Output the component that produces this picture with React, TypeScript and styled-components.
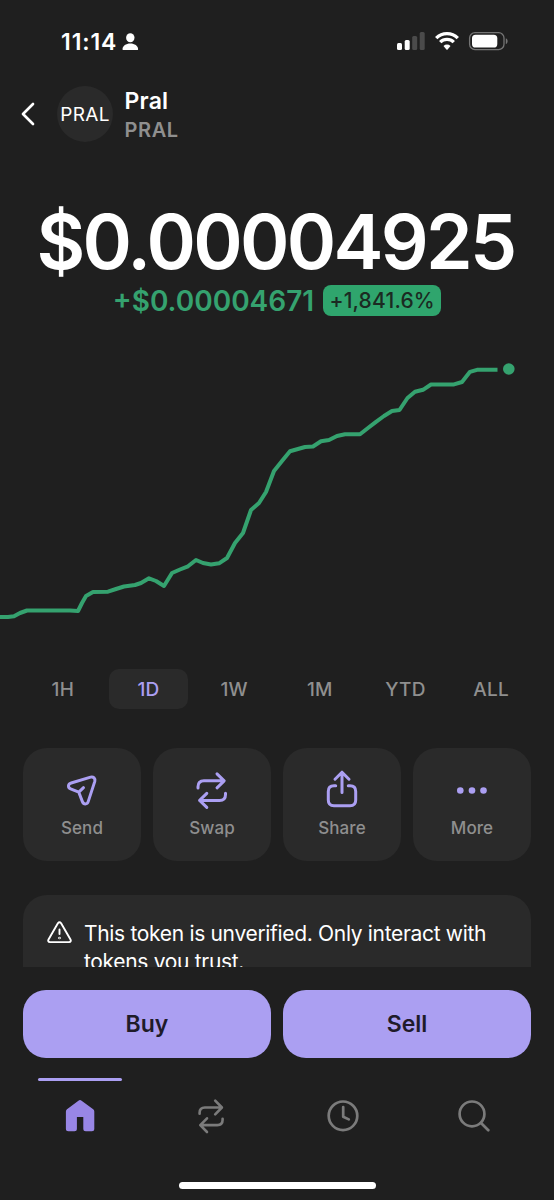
import React from "react";
import styled, { createGlobalStyle } from "styled-components";

const Global = createGlobalStyle`
  * { box-sizing: border-box; }
  html, body { margin: 0; background: #1f1f1f; }
  button { border: 0; margin: 0; padding: 0; background: none; font: inherit; color: inherit; }
  svg { display: block; flex: none; overflow: visible; }
`;

const Screen = styled.div`
  width: 554px;
  height: 1200px;
  overflow: hidden;
  display: flex;
  flex-direction: column;
  background: #1f1f1f;
  color: #fff;
  font-family: Inter, "Liberation Sans", sans-serif;
  white-space: nowrap;
`;

const StatusBar = styled.header`
  height: 82px;
  flex: none;
  padding: 0 46px 0 61px;
  display: flex;
  justify-content: space-between;
  align-items: center;
`;

const Clock = styled.div`
  padding-top: 1px;
  display: flex;
  align-items: center;
  gap: 5px;
  font-size: 23px;
  font-weight: 600;
  letter-spacing: 0.9px;
`;

const StatusIcons = styled.div`
  display: flex;
  align-items: center;
  gap: 10px;
`;

const TokenHeader = styled.div`
  height: 64px;
  flex: none;
  padding-left: 21px;
  display: flex;
  align-items: center;
`;

const Avatar = styled.div`
  width: 56px;
  height: 56px;
  margin: 0 11.5px 0 22px;
  border-radius: 50%;
  background: #2a2a2a;
  display: flex;
  align-items: center;
  justify-content: center;
  font-size: 19px;
  letter-spacing: 0.3px;
`;

const TokenTitle = styled.div`
  padding-top: 4px;
`;

const TokenName = styled.div`
  font-size: 23px;
  line-height: 29px;
  font-weight: 600;
  letter-spacing: 0.2px;
`;

const TokenSymbol = styled.div`
  font-size: 20px;
  line-height: 29px;
  font-weight: 600;
  letter-spacing: 0.6px;
  color: #8f8f8f;
`;

const Price = styled.h1`
  margin: 51px 0 0;
  padding-right: 3px;
  height: 88px;
  line-height: 90px;
  text-align: center;
  font-size: 75px;
  font-weight: 600;
  letter-spacing: -2.7px;
`;

const Change = styled.div`
  height: 31px;
  flex: none;
  display: flex;
  justify-content: center;
  align-items: center;
  gap: 9px;
`;

const ChangeAmount = styled.span`
  color: #35a26f;
  font-size: 28px;
  line-height: 30px;
  font-weight: 600;
`;

const ChangeBadge = styled.span`
  height: 31px;
  width: 118px;
  border-radius: 8px;
  background: #2fa56d;
  color: #1b2a22;
  font-size: 21px;
  line-height: 31px;
  text-align: center;
  font-weight: 500;
  letter-spacing: 0.2px;
`;

const Chart = styled.svg`
  width: 554px;
  height: 300px;
  margin-top: 24px;
`;

const Ranges = styled.div`
  height: 40px;
  flex: none;
  margin-top: 29px;
  padding: 0 20px;
  display: grid;
  grid-template-columns: repeat(6, 1fr);
  justify-items: center;
`;

const Range = styled.button<{ $active?: boolean }>`
  width: 79px;
  height: 40px;
  border-radius: 10px;
  background: ${(p) => (p.$active ? "#2a2a2a" : "transparent")};
  color: ${(p) => (p.$active ? "#ab9ff2" : "#8f8f8f")};
  font-size: 19px;
  font-weight: 550;
  letter-spacing: 0.3px;
`;

const Actions = styled.div`
  flex: none;
  margin-top: 39px;
  padding: 0 23px;
  display: grid;
  grid-template-columns: repeat(4, 1fr);
  gap: 12px;
`;

const Action = styled.button`
  height: 113px;
  border-radius: 24px;
  background: #2a2a2a;
  color: #8f8f8f;
  font-size: 17px;
  font-weight: 550;
  letter-spacing: 0.1px;
  display: flex;
  flex-direction: column;
  align-items: center;
  padding-top: 22px;
  gap: 7px;
  line-height: 22px;
`;

const Notice = styled.section`
  height: 72px;
  flex: none;
  margin: 34px 23px 0;
  padding: 24.5px 24px 0;
  overflow: hidden;
  border-radius: 24px 24px 0 0;
  background: #2a2a2a;
  display: flex;
  align-items: flex-start;
  gap: 12px;
  font-size: 21px;
  line-height: 28px;
  letter-spacing: -0.32px;
`;

const NoticeText = styled.p`
  margin: 0;
  padding-top: 0.5px;
`;

const Trade = styled.div`
  flex: none;
  margin-top: 23px;
  padding: 0 23px;
  display: grid;
  grid-template-columns: 1fr 1fr;
  gap: 12px;
`;

const TradeButton = styled.button`
  height: 68px;
  border-radius: 23px;
  background: #ab9ff2;
  color: #1f1b2a;
  font-size: 23px;
  font-weight: 600;
`;

const Nav = styled.nav`
  flex: none;
  margin-top: 20px;
  padding: 0 14px;
  display: grid;
  grid-template-columns: repeat(4, 1fr);
`;

const NavItem = styled.button<{ $active?: boolean }>`
  height: 76px;
  display: flex;
  flex-direction: column;
  align-items: center;
  gap: 18px;
  &::before {
    content: "";
    width: 84px;
    height: 3px;
    border-radius: 2px;
    background: ${(p) => (p.$active ? "#ab9ff2" : "transparent")};
  }
`;

const HomeBar = styled.div`
  width: 197px;
  height: 7.5px;
  flex: none;
  margin: 27.5px auto 0;
  border-radius: 4px;
  background: #fff;
`;

const stroke = (color: string, width: number) => ({
  fill: "none",
  stroke: color,
  strokeWidth: width,
  strokeLinecap: "round" as const,
  strokeLinejoin: "round" as const,
});

const PersonIcon = () => (
  <svg width="17" height="18" viewBox="0 0 17 18" fill="#fff">
    <ellipse cx="8.3" cy="4.7" rx="4.2" ry="4.5" />
    <path d="M.5 16.2C.5 12.6 4 10.4 8.3 10.4s7.8 2.2 7.8 5.8c0 .6-.4.9-1.1.9H1.6c-.7 0-1.1-.3-1.1-.9Z" />
  </svg>
);

const SignalIcon = () => (
  <svg width="28" height="18" viewBox="0 0 28 18">
    <rect x="0" y="11" width="5" height="7" rx="1.5" fill="#fff" />
    <rect x="7.7" y="8" width="5" height="10" rx="1.5" fill="#fff" />
    <rect x="15.2" y="4" width="5" height="14" rx="1.5" fill="#4b4b4b" />
    <rect x="22.7" y="0" width="5" height="18" rx="1.5" fill="#4b4b4b" />
  </svg>
);

const WifiIcon = () => (
  <svg width="24" height="18" viewBox="0 0 24 18">
    <g fill="none" stroke="#fff" strokeWidth="3.3">
      <path d="M1.2 6.1a15.3 15.3 0 0 1 21.6 0" />
      <path d="M5.2 10.2a9.6 9.6 0 0 1 13.6 0" />
    </g>
    <path d="M8.5 13.9a5 5 0 0 1 7 0L12.6 17.5q-.6.6-1.2 0Z" fill="#fff" />
  </svg>
);

const BatteryIcon = () => (
  <svg width="39" height="18" viewBox="0 0 39 18">
    <rect x=".6" y=".6" width="34.4" height="17" rx="5.4" fill="none" stroke="#757575" strokeWidth="1.3" />
    <rect x="3" y="2.7" width="25.3" height="12.8" rx="3.6" fill="#fff" />
    <path d="M36.8 6.2c2.4.6 2.4 5.2 0 5.8Z" fill="#757575" />
  </svg>
);

const BackIcon = () => (
  <svg width="14" height="24" viewBox="0 0 14 24" {...stroke("#fff", 2.7)}>
    <path d="M12 2 2 12l10 10" />
  </svg>
);

const SendIcon = () => (
  <svg width="38" height="40" viewBox="0 0 38 40" {...stroke("#ab9ff2", 3)}>
    <path d="M27.6 7.1 8.2 13C4.8 14 4.6 17.6 7.6 18.8L15.8 22.2 19.4 31.6C20.7 34.8 24.2 34.6 25.2 31.6L31.8 11.4C32.6 8.6 30.4 6.3 27.6 7.1ZM15.8 22.2 20.5 17.7" />
  </svg>
);

const SwapIcon = () => (
  <svg width="38" height="40" viewBox="0 0 38 40" {...stroke("#ab9ff2", 3)}>
    <path d="M5 18v-1.2q0-6 6-6h19.8M24 3.8l7.2 7-7.2 7M32.5 23.2v1.2q0 6-6 6H6.7M13.800 23.4l-7.2 7 7.2 7" />
  </svg>
);

const SmallSwapIcon = () => (
  <svg width="34" height="36" viewBox="0 1.2 34 36" {...stroke("#7b7b7b", 2.6)}>
    <path d="M5.6 16v-1q0-5.3 5.3-5.3H27.7M21.2 2.8l6.7 6.9-6.7 6.9M28.6 21v1q0 5.3-5.3 5.3H6.4M13 20.5l-6.7 6.8 6.7 6.9" />
  </svg>
);

const ShareIcon = () => (
  <svg width="38" height="40" viewBox="0 -0.5 38 40" {...stroke("#ab9ff2", 3)}>
    <path d="M12.7 15.2H11q-5.7 0-5.7 5.7v8.6q0 5.7 5.7 5.7h16q5.7 0 5.7-5.7v-8.6q0-5.7-5.7-5.7h-1.7M19 22V2M12 8.7l7-7 7 7" />
  </svg>
);

const MoreIcon = () => (
  <svg width="38" height="40" viewBox="0 -0.5 38 40" fill="#ab9ff2">
    <circle cx="7.3" cy="20" r="3.3" />
    <circle cx="19" cy="20" r="3.3" />
    <circle cx="30.5" cy="20" r="3.3" />
  </svg>
);

const WarningIcon = () => (
  <svg width="25" height="28" viewBox="0 0 25 28" {...stroke("#fff", 1.9)}>
    <path d="M10.9 3.3 1.5 19.4q-1.1 2.4 1.5 2.7h19q2.6-.3 1.5-2.7L14.1 3.3q-1.6-2.2-3.2 0ZM12.5 9.5v4.6" />
    <circle cx="12.5" cy="18" r=".4" />
  </svg>
);

const HomeIcon = () => (
  <svg width="30" height="34" viewBox="0 0 30 34" fill="#9886e5">
    <path d="M13.4 1.7q1.6-1.2 3.2 0l11.6 8.6q1.1.9 1.1 2.3v17.2q0 2.5-2.5 2.5h-6q-2.5 0-2.5-2.5V18h-6.4v11.8q0 2.5-2.5 2.5h-6Q.9 32.3.9 29.8V12.6q0-1.4 1.1-2.3Z" />
  </svg>
);

const HistoryIcon = () => (
  <svg width="32" height="34" viewBox="0 0 32 34" {...stroke("#7b7b7b", 2.7)}>
    <circle cx="16" cy="16.8" r="14.3" />
    <path d="M16.2 8v9.7l5.6 2.7" />
  </svg>
);

const SearchIcon = () => (
  <svg width="32" height="34" viewBox="0 0 32 34" {...stroke("#7b7b7b", 2.7)}>
    <circle cx="14" cy="14.9" r="12.4" />
    <path d="m23.3 24.2 7 7" />
  </svg>
);

const pricePoints =
  "0,617 8,617 14,616.3 20,613 27,610.5 35,610.4 70,610.4 78,611 82,603 86,596 93,592 108,591.7 116,589 124,586.5 135,585 141,583 149,578.3 156,581 164,586 172,573 180,569.5 188,566.3 196,560 203,563 211,564.5 219,563.3 227,558 235,543 243,533 251,510 259,503 266,492 274,471 282,461 290,451.2 305,447 313,446.5 321,441.3 329,440 337,436 345,434.3 360,434.3 368,428 376,421.8 384,416 392,411 399.5,410 407.5,398 415,391.8 423,389.8 431,384.5 445,384.6 454,384.4 462,382 470,371.8 477,369.8 497.5,369.8";

const ranges = ["1H", "1D", "1W", "1M", "YTD", "ALL"];

const actions = [
  { label: "Send", icon: <SendIcon /> },
  { label: "Swap", icon: <SwapIcon /> },
  { label: "Share", icon: <ShareIcon /> },
  { label: "More", icon: <MoreIcon /> },
];

const navItems = [
  { label: "Home", icon: <HomeIcon /> },
  { label: "Swap", icon: <SmallSwapIcon /> },
  { label: "History", icon: <HistoryIcon /> },
  { label: "Search", icon: <SearchIcon /> },
];

export default function App() {
  return (
    <Screen>
      <Global />
      <StatusBar>
        <Clock>
          11:14
          <PersonIcon />
        </Clock>
        <StatusIcons>
          <SignalIcon />
          <WifiIcon />
          <BatteryIcon />
        </StatusIcons>
      </StatusBar>
      <TokenHeader>
        <BackIcon />
        <Avatar>PRAL</Avatar>
        <TokenTitle>
          <TokenName>Pral</TokenName>
          <TokenSymbol>PRAL</TokenSymbol>
        </TokenTitle>
      </TokenHeader>
      <Price>$0.00004925</Price>
      <Change>
        <ChangeAmount>+$0.00004671</ChangeAmount>
        <ChangeBadge>+1,841.6%</ChangeBadge>
      </Change>
      <Chart viewBox="0 340 554 300">
        <polyline points={pricePoints} fill="none" stroke="#35a26f" strokeWidth="4" strokeLinejoin="round" />
        <circle cx="508.8" cy="369" r="5.8" fill="#35a26f" />
      </Chart>
      <Ranges>
        {ranges.map((r) => (
          <Range key={r} $active={r === "1D"}>
            {r}
          </Range>
        ))}
      </Ranges>
      <Actions>
        {actions.map((a) => (
          <Action key={a.label}>
            {a.icon}
            {a.label}
          </Action>
        ))}
      </Actions>
      <Notice>
        <WarningIcon />
        <NoticeText>
          This token is unverified. Only interact with
          <br />
          tokens you trust.
        </NoticeText>
      </Notice>
      <Trade>
        <TradeButton>Buy</TradeButton>
        <TradeButton>Sell</TradeButton>
      </Trade>
      <Nav>
        {navItems.map((n, i) => (
          <NavItem key={n.label} $active={i === 0} aria-label={n.label}>
            {n.icon}
          </NavItem>
        ))}
      </Nav>
      <HomeBar />
    </Screen>
  );
}
